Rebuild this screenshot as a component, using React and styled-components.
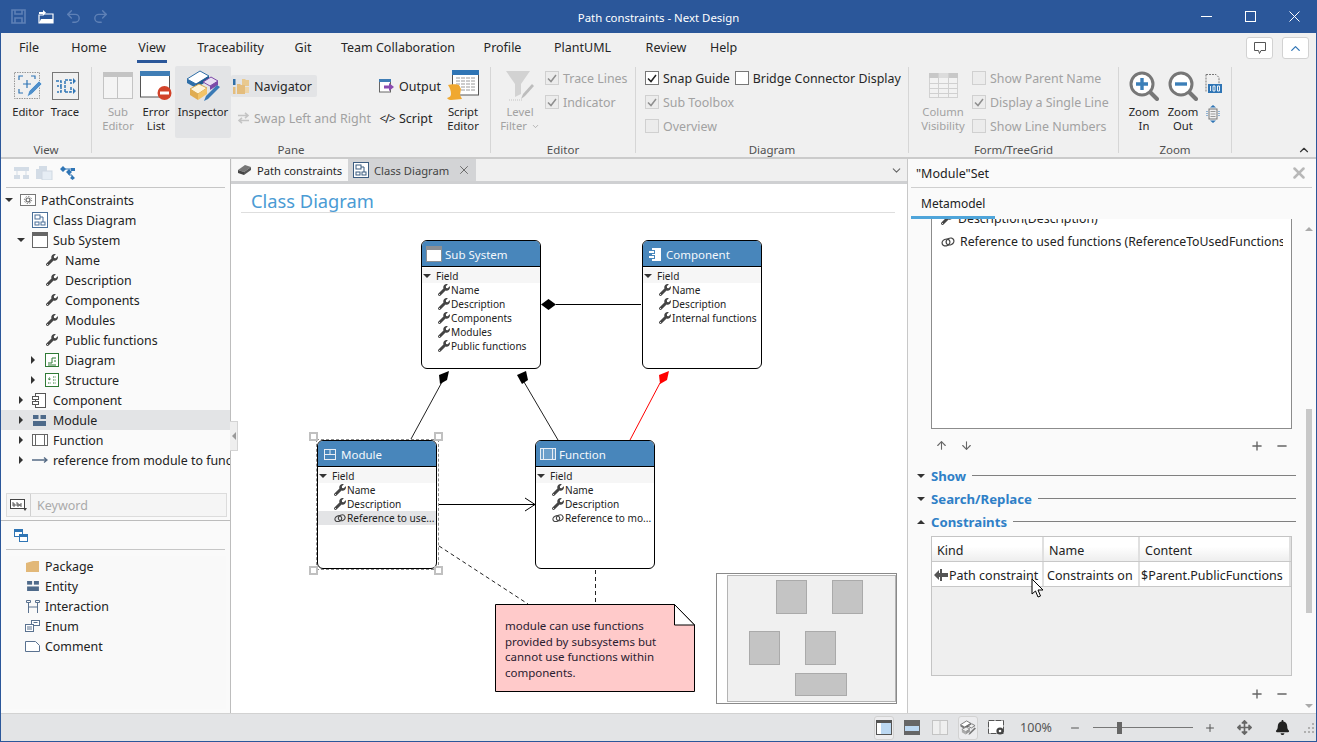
import React from "react";
import styled, { createGlobalStyle } from "styled-components";
import { FaWrench, FaBell, FaArrowsAlt } from "react-icons/fa";
import { Undo2, Redo2, ArrowUp, ArrowDown, Plus, Minus, X, ChevronDown, ChevronUp } from "lucide-react";

const GlobalStyle = createGlobalStyle`
  html, body { margin: 0; padding: 0; overflow: hidden; }
  body { font-family: "Noto Sans", "Noto Sans CJK JP", sans-serif; font-size: 13px; color: #222; }
  * { box-sizing: border-box; }
  svg { display: block; flex-shrink: 0; }
`;

const Window = styled.div`
  width: 1317px;
  height: 742px;
  display: flex;
  flex-direction: column;
  border: 1px solid #2b579a;
  border-top: none;
  background: #f0f0f0;
  position: relative;
  overflow: hidden;
`;

/* title bar */
const TitleBar = styled.div`
  height: 33px;
  background: #2b579a;
  display: grid;
  grid-template-columns: 1fr auto 1fr;
  align-items: center;
  margin: 0 -1px;
  color: #fff;
`;
const Quick = styled.div`
  display: flex;
  align-items: center;
  padding-left: 8px;
  gap: 7.5px;
`;
const QuickBtn = styled.div`
  width: 20px;
  height: 20px;
  display: flex;
  align-items: center;
  justify-content: center;
  color: ${(p) => (p.$dim ? "#5e80b6" : "#fff")};
`;
const Title = styled.div`
  font-size: 11.4px;
  line-height: 16px;
  padding-top: 2px;
`;
const WinControls = styled.div`
  display: flex;
  justify-content: flex-end;
  padding-right: 1px;
`;
const WinBtn = styled.div`
  width: 44px;
  height: 33px;
  display: flex;
  align-items: center;
  justify-content: center;
`;

/* ribbon */
const RibbonTabs = styled.div`
  height: 30px;
  display: flex;
  align-items: flex-start;
  padding-left: 1px;
  position: relative;
`;
const RibbonTab = styled.div`
  margin-left: ${(p) => p.$ml || 0}px;
  width: ${(p) => p.$w}px;
  height: 30px;
  text-align: center;
  line-height: 29px;
  font-size: 12.5px;
  color: #262626;
  border-bottom: 3px solid ${(p) => (p.$active ? "#2b579a" : "transparent")};
`;
const RibbonRight = styled.div`
  margin-left: auto;
  margin-right: 7px;
  margin-top: 4px;
  display: flex;
  gap: 9px;
`;
const SquareBtn = styled.div`
  width: 27px;
  height: 22px;
  background: #fff;
  border: 1px solid #d2d2d2;
  border-radius: 3px;
  display: flex;
  align-items: center;
  justify-content: center;
  color: ${(p) => p.$color || "#444"};
`;
const RibbonBody = styled.div`
  height: 96px;
  display: flex;
  border-bottom: 2px solid #cbcbcb;
  position: relative;
`;
const Group = styled.div`
  width: ${(p) => p.$w}px;
  display: flex;
  flex-direction: column;
`;
const GroupBody = styled.div`
  height: 79px;
  padding-top: 3px;
  padding-left: ${(p) => p.$pl || 0}px;
  display: flex;
  align-items: flex-start;
`;
const GroupLabel = styled.div`
  text-align: center;
  font-size: 11.5px;
  line-height: 15px;
  color: #505050;
`;
const Sep = styled.div`
  width: 1px;
  margin: 4px 0 4px;
  background: #d6d6d6;
`;
const LargeBtn = styled.div`
  width: ${(p) => p.$w}px;
  margin-left: ${(p) => p.$ml || 0}px;
  height: 72px;
  display: flex;
  flex-direction: column;
  align-items: center;
  border-radius: 2px;
  background: ${(p) => (p.$active ? "#e3e4e6" : "transparent")};
  color: ${(p) => (p.$off ? "#a2a2a2" : "#262626")};
`;
const LargeIcon = styled.div`
  height: 39px;
  display: flex;
  align-items: center;
  justify-content: center;
`;
const LargeText = styled.div`
  font-size: 11.3px;
  line-height: 14px;
  text-align: center;
  white-space: pre;
`;
const FilterLine = styled.div`
  display: flex;
  align-items: center;
  justify-content: center;
  gap: 1px;
`;
const SmallCol = styled.div`
  width: ${(p) => p.$w}px;
  padding-top: 9px;
  display: flex;
  flex-direction: column;
  gap: 10px;
`;
const SmallBtn = styled.div`
  align-self: flex-start;
  height: 22px;
  display: flex;
  align-items: center;
  gap: ${(p) => p.$gap || 4}px;
  padding: 0 ${(p) => p.$pr || 0}px 0 ${(p) => p.$pl || 0}px;
  border-radius: 2px;
  font-size: 12.5px;
  white-space: nowrap;
  background: ${(p) => (p.$active ? "#e3e4e6" : "transparent")};
  color: ${(p) => (p.$off ? "#a2a2a2" : "#262626")};
`;
const Angle = styled.span`
  width: 16px;
  text-align: center;
  font-size: 12px;
  letter-spacing: -1px;
`;
const CheckCol = styled.div`
  margin-left: ${(p) => p.$ml || 0}px;
  display: flex;
  flex-direction: column;
`;
const CheckRow = styled.div`
  height: 24px;
  display: flex;
  align-items: center;
`;
const CheckItem = styled.div`
  display: flex;
  align-items: center;
  gap: 4px;
  margin-left: ${(p) => p.$ml || 0}px;
  font-size: 12.4px;
  white-space: nowrap;
  color: ${(p) => (p.$off ? "#a2a2a2" : "#262626")};
`;
const CheckBox = styled.div`
  width: 14px;
  height: 14px;
  border: 1px solid ${(p) => (p.$off ? "#d0d0d0" : "#777")};
  background: ${(p) => (p.$off ? "#ececec" : "#fff")};
  display: flex;
  align-items: center;
  justify-content: center;
`;
const MiniCol = styled.div`
  margin-left: 4px;
  padding-top: 8px;
  display: flex;
  flex-direction: column;
  gap: 12px;
`;
const RibbonCollapse = styled.div`
  position: absolute;
  right: 5px;
  bottom: 0;
  color: #333;
`;

/* main */
const Main = styled.div`
  flex: 1;
  display: flex;
  min-height: 0;
`;
const LeftPane = styled.div`
  width: 230px;
  background: #fafafa;
  border-right: 1px solid #bdbdbd;
  display: flex;
  flex-direction: column;
  position: relative;
`;
const PaneBar = styled.div`
  height: 29px;
  margin: 0 5px;
  border-bottom: 1px solid #c6c6c6;
  display: flex;
  align-items: center;
  gap: 7px;
  padding-left: 8px;
`;
const Tree = styled.div`
  height: 302px;
  margin-top: 2px;
  overflow: hidden;
`;
const TreeRow = styled.div`
  height: 20px;
  display: flex;
  align-items: center;
  padding-left: ${(p) => 2 + p.$level * 12}px;
  background: ${(p) => (p.$selected ? "#e3e4e6" : "transparent")};
  font-size: 12.4px;
  white-space: nowrap;
  overflow: hidden;
`;
const ArrowCell = styled.div`
  width: 12px;
  flex-shrink: 0;
  display: flex;
  justify-content: center;
`;
const IconCell = styled.div`
  width: 26px;
  padding-right: 1px;
  flex-shrink: 0;
  display: flex;
  justify-content: center;
`;
const SearchWrap = styled.div`
  height: 29px;
  padding: 1px 3px 0 5px;
  border-bottom: 1px solid #bcbcbc;
`;
const SearchBox = styled.div`
  height: 24px;
  width: 221px;
  border: 1px solid #dcdcdc;
  background: #f5f5f5;
  display: flex;
  align-items: center;
`;
const SearchIcon = styled.div`
  width: 24px;
  height: 100%;
  border-right: 1px solid #d0d0d0;
  display: flex;
  align-items: center;
  justify-content: center;
`;
const Placeholder = styled.span`
  font-size: 12.5px;
  color: #aaa;
  padding-left: 6px;
`;
const Palette = styled.div`
  flex: 1;
  margin: 6px 4px 4px;
  background: #f9f9f9;
`;
const PaletteRow = styled.div`
  height: 20px;
  display: flex;
  align-items: center;
  padding-left: 20px;
  gap: 5px;
  font-size: 12.4px;
`;
const PaletteIcon = styled.div`
  width: 15px;
  display: flex;
  justify-content: center;
`;
const Splitter = styled.div`
  position: absolute;
  right: -8px;
  top: 262px;
  width: 8px;
  height: 30px;
  background: #eee;
  border: 1px solid #d4d4d4;
  border-left: none;
  display: flex;
  align-items: center;
  justify-content: center;
  z-index: 3;
`;

/* center */
const Center = styled.div`
  width: 676px;
  display: flex;
  flex-direction: column;
  background: #fff;
`;
const DocTabs = styled.div`
  height: 25px;
  background: #f0f0f0;
  border-bottom: 3px solid #cfd0d2;
  display: flex;
  align-items: stretch;
  padding-left: 1px;
  position: relative;
`;
const DocTab = styled.div`
  width: ${(p) => p.$w}px;
  display: flex;
  align-items: center;
  gap: 5px;
  padding-left: ${(p) => p.$pl}px;
  background: ${(p) => (p.$active ? "#d3d4d6" : "#f7f7f7")};
  font-size: 11.2px;
  white-space: nowrap;
  color: ${(p) => (p.$active ? "#444" : "#262626")};
`;
const DocClose = styled.div`
  margin-left: 3px;
  color: #555;
`;
const DocMenu = styled.div`
  margin-left: auto;
  margin-right: 4px;
  align-self: center;
  color: #666;
`;
const Stage = styled.div`
  flex: 1;
  position: relative;
  overflow: hidden;
`;
const DiagramTitle = styled.div`
  margin: 7px 12px 0 10px;
  height: 22px;
  border-bottom: 1px solid #dedede;
  padding-left: 10px;
  color: #4a9bd4;
  font-size: 18.3px;
  line-height: 20px;
`;
const Wires = styled.svg`
  position: absolute;
  inset: 0;
`;
const Node = styled.div`
  position: absolute;
  left: ${(p) => p.$x}px;
  top: ${(p) => p.$y}px;
  width: 120px;
  height: 129px;
  border: 1px solid #000;
  border-radius: 6px;
  background: #fff;
  overflow: hidden;
`;
const NodeHead = styled.div`
  height: 26px;
  background: #4886bb;
  border-bottom: 1px solid #000;
  color: #f4f8fc;
  display: flex;
  align-items: center;
  gap: 3px;
  padding: 1px 0 0 4px;
  font-size: 11.5px;
`;
const HeadIcon = styled.div`
  width: 16px;
  display: flex;
  justify-content: center;
`;
const NodeField = styled.div`
  margin-top: 1px;
  padding: 1px 0 0 1px;
  height: 15px;
  background: #f6f6f6;
  display: flex;
  align-items: center;
  gap: 5px;
  font-size: 10.1px;
`;
const NodeMember = styled.div`
  height: 14px;
  display: flex;
  align-items: center;
  gap: 1px;
  padding-left: 16px;
  font-size: 10.1px;
  white-space: nowrap;
  overflow: hidden;
  background: ${(p) => (p.$selected ? "#e3e4e6" : "transparent")};
`;
const Handle = styled.div`
  position: absolute;
  left: ${(p) => p.$x}px;
  top: ${(p) => p.$y}px;
  width: 9px;
  height: 9px;
  background: #fff;
  border: 2px solid #c0c0c0;
`;
const Selection = styled.div`
  position: absolute;
  left: 85px;
  top: 255px;
  width: 123px;
  height: 131px;
  border: 1px dashed #8a8a8a;
`;
const Note = styled.div`
  position: absolute;
  left: 264px;
  top: 420px;
  width: 200px;
  height: 88px;
  padding: 14px 30px 0 10px;
  font-size: 11.5px;
  line-height: 15.7px;
  color: #2a2030;
`;
const NoteShape = styled.svg`
  position: absolute;
  left: 264px;
  top: 420px;
`;
const Overview = styled.svg`
  position: absolute;
  left: 485px;
  top: 389px;
`;

/* right pane */
const RightPane = styled.div`
  flex: 1;
  background: #fafafa;
  border-left: 1px solid #c8c8c8;
  display: flex;
  flex-direction: column;
  position: relative;
  min-width: 0;
`;
const RightHead = styled.div`
  height: 29px;
  margin: 0 4px 0 3px;
  border-bottom: 1px solid #cfcfcf;
  display: flex;
  align-items: center;
  justify-content: space-between;
  padding: 0 4px 0 5px;
  font-size: 12.5px;
`;
const RightTabs = styled.div`
  height: 31px;
  margin-left: 3px;
  display: flex;
`;
const RightTab = styled.div`
  width: 84px;
  padding-left: 10px;
  line-height: 32px;
  font-size: 12px;
  border-bottom: 3px solid #4fa5da;
`;
const RightBody = styled.div`
  flex: 1;
  display: flex;
  min-height: 0;
`;
const RightContent = styled.div`
  width: 396px;
  padding-left: 23px;
  display: flex;
  flex-direction: column;
`;
const ListBox = styled.div`
  width: 361px;
  height: 210px;
  background: #fff;
  border: 1px solid #8c8c8c;
  border-top: none;
  overflow: hidden;
  padding: 0 8px 0 9px;
`;
const ListInner = styled.div`
  margin-top: -12px;
`;
const ListRow = styled.div`
  height: 23px;
  display: flex;
  align-items: center;
  gap: 5px;
  font-size: 12.3px;
  white-space: nowrap;
  overflow: hidden;
`;
const ListTools = styled.div`
  width: 361px;
  height: ${(p) => p.$h}px;
  flex-shrink: 0;
  display: flex;
  align-items: center;
  padding: 0 3px 0 4px;
  gap: 12px;
  color: #666;
`;
const Push = styled.div`
  margin-left: auto;
`;
const PlusMinus = styled.div`
  display: flex;
  gap: 11px;
`;
const Sections = styled.div`
  margin: 2px 8px 0 -14px;
`;
const Section = styled.div`
  height: 23px;
  display: flex;
  align-items: center;
  gap: 6px;
`;
const SectionName = styled.div`
  font-size: 13.2px;
  font-weight: 700;
  color: #2f80c7;
  white-space: nowrap;
`;
const SectionLine = styled.div`
  flex: 1;
  height: 1px;
  background: #808080;
`;
const Table = styled.div`
  width: 361px;
  height: 140px;
  margin-top: 3px;
  border: 1px solid #c4c4c4;
  background: #efefef;
  flex-shrink: 0;
`;
const TableRow = styled.div`
  display: grid;
  grid-template-columns: 112px 96px 151px;
  height: ${(p) => p.$h}px;
  border-bottom: 1px solid #c8c8c8;
  background: ${(p) => (p.$head ? "linear-gradient(#fff 40%, #eeeeee)" : "#fff")};
`;
const Cell = styled.div`
  display: flex;
  align-items: center;
  gap: 1px;
  padding: 2px 0 0 ${(p) => p.$pl || 2}px;
  border-right: 2px solid #e0e0e0;
  font-size: 12.5px;
  white-space: nowrap;
  overflow: hidden;
`;
const Scrollbar = styled.div`
  width: 10px;
  display: flex;
  flex-direction: column;
  align-items: center;
  padding-top: 6px;
`;
const Thumb = styled.div`
  width: 6px;
  height: 204px;
  margin-top: 176px;
  background: #c8c8c8;
`;
const ScrollEnd = styled.div`
  margin-top: 89px;
`;
const Cursor = styled.svg`
  position: absolute;
  left: 123px;
  top: 419px;
`;

/* status bar */
const StatusBar = styled.div`
  height: 28px;
  background: #e3e4e6;
  border-top: 1px solid #d2d2d2;
  display: flex;
  align-items: center;
  justify-content: flex-end;
  padding-right: 1px;
`;
const StatusItem = styled.div`
  margin-left: ${(p) => p.$ml || 0}px;
  height: 24px;
  width: ${(p) => p.$w}px;
  display: flex;
  align-items: center;
  justify-content: center;
  color: #555;
  font-size: 12.5px;
  white-space: nowrap;
  border: ${(p) => (p.$on ? "1px solid #d2d2d2" : "none")};
  border-radius: 3px;
  background: ${(p) => (p.$on ? "#ececee" : "transparent")};
`;
const Slider = styled.div`
  margin-left: 13px;
  width: 100px;
  height: 14px;
  position: relative;
  display: flex;
  align-items: center;
  &::before {
    content: "";
    display: block;
    width: 100%;
    height: 1px;
    background: #777;
  }
`;
const SliderThumb = styled.div`
  position: absolute;
  left: 24px;
  top: 1px;
  width: 5px;
  height: 12px;
  background: #666;
`;

/* tiny arrows */
const Tri = ({ dir = "down", c = "#333" }) => {
  const pts = { down: "0,2 8,2 4,6", right: "2,0 6,4 2,8", up: "0,6 8,6 4,2", left: "6,0 2,4 6,8" };
  return (
    <svg width="8" height="8" viewBox="0 0 8 8">
      <polygon points={pts[dir]} fill={c} />
    </svg>
  );
};

/* icons */
const Floppy = () => (
  <svg width="15" height="15" viewBox="0 0 15 15" fill="none" stroke="currentColor" strokeWidth="1.6">
    <path d="M1 1h13v13H1z" />
    <path d="M4 1v4h7V1M4 14V9h7v5" />
  </svg>
);
const OpenFile = () => (
  <svg width="16" height="15" viewBox="0 0 16 15">
    <path d="M1 6h4l1-1h9v9H1z" fill="none" stroke="#fff" strokeWidth="1.2" />
    <path d="M1 14l2-4h12v4z" fill="#fff" />
    <path d="M1 3h4V1l3 2.8L5 6.5V5H1z" fill="#fff" />
  </svg>
);
const EditorIco = () => (
  <svg width="30" height="29" viewBox="0 0 30 29" fill="none">
    <rect x="1.5" y="1.5" width="25" height="26" stroke="#999" strokeDasharray="1.5 1" />
    <path d="M6 9V5h4M18 5h4v3M6 18v4h4" stroke="#2f75b5" strokeWidth="1.2" />
    <path d="M14 9v8M10 13h8" stroke="#2f75b5" strokeWidth="1.2" />
    <path d="M14 26l2-6 10-10 3 3-10 10z" fill="#4f8fca" stroke="#fff" strokeWidth=".6" />
  </svg>
);
const TraceIco = () => (
  <svg width="27" height="28" viewBox="0 0 27 28" fill="none">
    <rect x=".5" y=".5" width="26" height="27" stroke="#777" />
    <path d="M4 9h5v5H5m4 0v6H5M13 20V8h6v4m-6 8h6v-5" stroke="#2f75b5" strokeWidth="1.5" strokeDasharray="3 1" />
    <path d="M21 6l3 3-3 3zM21 16l3 3-3 3z" fill="#2f75b5" />
  </svg>
);
const SubEditorIco = () => (
  <svg width="30" height="27" viewBox="0 0 30 27" fill="none">
    <rect x=".5" y=".5" width="29" height="26" fill="#f4f4f4" stroke="#c4c4c4" />
    <rect x="0" y="0" width="30" height="5" fill="#c4c4c4" />
    <path d="M14.5 5v22" stroke="#c4c4c4" />
  </svg>
);
const ErrorIco = () => (
  <svg width="33" height="30" viewBox="0 0 33 30" fill="none">
    <rect x=".5" y="1" width="29" height="25" fill="#fff" stroke="#555" />
    <rect x="0" y="0" width="30" height="5" fill="#3f7db5" />
    <circle cx="24.5" cy="22" r="7" fill="#d2432a" />
    <rect x="20" y="20.5" width="9" height="3" fill="#fff" />
  </svg>
);
const InspectorIco = ({ s = 34 }) => (
  <svg width={s} height={(s * 32) / 34} viewBox="0 0 34 32">
    <path d="M1 9l13-8 9 5-13 8z" fill="#fff" stroke="#2f6fa8" />
    <path d="M1 9l9 5v4L1 13z" fill="#2f6fa8" />
    <path d="M10 14l13-8v4L10 18z" fill="#1f5a90" />
    <path d="M17 12l8-5 7 4-8 5z" fill="#e9dff3" stroke="#7d4aa8" />
    <path d="M24 16l8-5v4l-8 5z" fill="#7d4aa8" />
    <path d="M4 19l9-5 8 4-9 6z" fill="#fff4d8" stroke="#d8a84e" />
    <path d="M4 19l8 5v6l-8-5z" fill="#e0ac50" />
    <path d="M12 24l9-6v6l-9 6z" fill="#f3c468" />
    <path d="M18 31l2-5 11-11 3 2-12 12z" fill="#3a7ab5" />
  </svg>
);
const GrayInspectorIco = () => (
  <svg width="16" height="16" viewBox="0 0 34 32">
    <path d="M1 9l13-8 9 5-13 8z" fill="#fff" stroke="#777" strokeWidth="2" />
    <path d="M1 9l9 5v4L1 13z" fill="#777" />
    <path d="M10 14l13-8v4L10 18z" fill="#666" />
    <path d="M17 12l8-5 7 4-8 5z" fill="#eee" stroke="#777" strokeWidth="2" />
    <path d="M4 19l9-5 8 4-9 6z" fill="#eee" stroke="#888" strokeWidth="2" />
    <path d="M4 19l8 5v6l-8-5z" fill="#aaa" />
    <path d="M12 24l9-6v6l-9 6z" fill="#999" />
    <path d="M18 31l2-5 11-11 3 2-12 12z" fill="#777" />
  </svg>
);
const PathModelIco = () => (
  <svg width="15" height="12" viewBox="0 0 15 12">
    <path d="M1 6l7-5 6 2-7 5z" fill="#777" />
    <path d="M1 6l6 2v3L1 9z" fill="#444" />
    <path d="M7 8l7-5v3l-7 5z" fill="#555" />
  </svg>
);
const NavigatorIco = () => (
  <svg width="17" height="17" viewBox="0 0 17 17">
    <rect x="0" y="1" width="2.5" height="6" fill="#2f6fa8" />
    <rect x="0" y="9" width="2.5" height="7" fill="#e4bd7d" />
    <path d="M9 1h3l1 1h3v6H9z" fill="#e9c98f" />
    <path d="M4 6h3l1 1h4v9H4z" fill="#e4bd7d" />
    <path d="M9 9h7v6h-4V9z" fill="#eed5a8" />
  </svg>
);
const SwapIco = () => (
  <svg width="13" height="12" viewBox="0 0 13 12" fill="none" stroke="#c4c4c4" strokeWidth="1.6">
    <path d="M1 3.5h10M8 .8l3 2.7-3 2.7M12 8.5H2M5 5.8L2 8.5l3 2.7" />
  </svg>
);
const OutputIco = () => (
  <svg width="16" height="14" viewBox="0 0 16 14">
    <rect x=".5" y=".5" width="11" height="12.5" fill="#fff" stroke="#666" />
    <rect x="0" y="0" width="12" height="3" fill="#3f7db5" />
    <path d="M5 6.5h5V4l5 4-5 4V9.5H5z" fill="#8a4bb0" />
  </svg>
);
const ScriptEditorIco = () => (
  <svg width="32" height="31" viewBox="0 0 32 31">
    <rect x="5.5" y="1" width="26" height="24" fill="#fff" stroke="#555" />
    <rect x="5" y="0" width="27" height="5" fill="#2f75b5" />
    <path d="M9 8h19M9 11h19M9 14h19M9 17h19M9 20h19" stroke="#9a9a9a" strokeDasharray="4 1" />
    <path d="M1 15c3-1 9-1 11 0l2 4-1 6 2 4-11 1c-3 0-4-2-4-2 3-1 4-2 4-4 0-3-1-6-3-9z" fill="#f0a830" />
  </svg>
);
const FunnelIco = () => (
  <svg width="30" height="31" viewBox="0 0 30 31">
    <path d="M1 1h24l-9 13v10l-6 3V14z" fill="#d2d2d2" />
    <path d="M16 29l2-5 9-10 2 2-9 10z" fill="#bdbdbd" />
    <path d="M4 30h14" stroke="#c4c4c4" strokeDasharray="1 1" />
  </svg>
);
const ColumnsIco = () => (
  <svg width="29" height="25" viewBox="0 0 29 25" fill="none">
    <rect x=".5" y=".5" width="28" height="24" fill="#f2f2f2" stroke="#d2d2d2" />
    <rect x="0" y="0" width="29" height="5" fill="#c8c8c8" />
    <path d="M9.5 0v25M19.5 0v25M0 10.5h29M0 15.5h29M0 20.5h29" stroke="#d0d0d0" />
    <rect x="10" y="0" width="9" height="5" fill="#dcdcdc" />
  </svg>
);
const ZoomIco = ({ plus }) => (
  <svg width="30" height="30" viewBox="0 0 30 30" fill="none">
    <path d="M20 20l8 8" stroke="#777" strokeWidth="4" strokeLinecap="round" />
    <circle cx="13" cy="13" r="11" fill="#fff" stroke="#777" strokeWidth="3" />
    <path d={plus ? "M7 13h12M13 7v12" : "M7 13h12"} stroke="#3c7fb8" strokeWidth="3.4" />
  </svg>
);
const PageIco = () => (
  <svg width="17" height="19" viewBox="0 0 17 19" fill="none">
    <path d="M1 .5h10l3 3V10M1 .5V18" stroke="#777" strokeDasharray="2 1" />
    <rect x="3" y="10" width="14" height="9" fill="#2f75b5" />
    <path d="M5.5 12v5M8 12h2v5H8zM12.5 12h2v5h-2z" stroke="#fff" strokeWidth=".9" />
  </svg>
);
const FitIco = () => (
  <svg width="16" height="18" viewBox="0 0 16 18" fill="none">
    <rect x="4" y="4" width="8" height="10" stroke="#777" />
    <path d="M5.5 6.5h5M5.5 9h5M5.5 11.5h5" stroke="#9a9a9a" />
    <path d="M5 2.5L8 0l3 2.5zM5 15.5L8 18l3-2.5z" fill="#2f75b5" />
    <path d="M2 6v6M14 6v6" stroke="#2f75b5" strokeDasharray="1 1" />
  </svg>
);
const CommentIco = () => (
  <svg width="14" height="14" viewBox="0 0 14 14" fill="none" stroke="#555">
    <path d="M1.5 1.5h11v8H8l-1.5 3-1-3h-4z" />
  </svg>
);
const TreeTool = () => (
  <svg width="15" height="13" viewBox="0 0 15 13" fill="#d3dce6">
    <rect x="0" y="0" width="15" height="4" />
    <rect x="0" y="8" width="6" height="4" />
    <rect x="9" y="8" width="6" height="4" />
    <path d="M3 4v4M12 4v4" stroke="#d3dce6" />
  </svg>
);
const CopyTool = () => (
  <svg width="17" height="14" viewBox="0 0 17 14" fill="#d3dce6">
    <rect x="0" y="3" width="6" height="10" />
    <rect x="3" y="0" width="8" height="5" />
    <rect x="6" y="5" width="10" height="9" fill="#e6edf4" stroke="#cfd8e2" />
  </svg>
);
const NetTool = () => (
  <svg width="15" height="14" viewBox="0 0 15 14" fill="#2f75b5">
    <path d="M0 3l3-3 3 3-3 3zM6 6l3-3 3 3-3 3zM10 12l2.500-2.500L15 12l-2.500 2z" />
    <rect x="11" y="2" width="4" height="3" />
    <path d="M3 3h10M9 6v3h3v2" stroke="#2f75b5" fill="none" />
  </svg>
);
const PackageIco = () => (
  <svg width="16" height="16" viewBox="0 0 16 16" fill="none">
    <rect x=".5" y="2.500" width="15" height="11" fill="#fff" stroke="#777" />
    <circle cx="8" cy="8" r="2" stroke="#666" strokeWidth="1.2" />
    <circle cx="8" cy="8" r="3.600" stroke="#666" strokeDasharray="1.2 1.6" />
  </svg>
);
const DiagramIco = ({ c = "#4a6f98" }) => (
  <svg width="16" height="16" viewBox="0 0 16 16" fill="none" stroke={c}>
    <rect x=".5" y=".5" width="15" height="15" fill="#fff" />
    <rect x="3" y="3" width="5" height="4" />
    <rect x="3" y="10" width="4" height="3" />
    <rect x="9" y="10" width="4" height="3" />
    <path d="M8 5h3v5" />
  </svg>
);
const WindowIco = ({ c = "#666", fill = "#fff" }) => (
  <svg width="16" height="16" viewBox="0 0 16 16" fill={fill} stroke={c}>
    <rect x=".5" y=".5" width="15" height="15" />
    <rect x="0" y="0" width="16" height="4" fill={c} stroke="none" />
  </svg>
);
const GreenDiagram = () => (
  <svg width="14" height="14" viewBox="0 0 14 14" fill="none" stroke="#2f7a35">
    <rect x=".5" y=".5" width="13" height="13" fill="#fff" />
    <path d="M3 10h4V5h4M3 12h8M9 8h2" />
  </svg>
);
const GreenTable = () => (
  <svg width="14" height="14" viewBox="0 0 14 14" fill="none" stroke="#2f7a35">
    <rect x=".5" y=".5" width="13" height="13" fill="#fff" />
    <path d="M3 6h3M4.500 4.500v3M8 4h3M8 7h3M8 10h3M3 10h3" strokeDasharray="1 .6" />
  </svg>
);
const ComponentIco = ({ c = "#555", fill = "#fff" }) => (
  <svg width="15" height="15" viewBox="0 0 15 15" fill={fill} stroke={c}>
    <rect x="3.500" y=".5" width="10" height="14" />
    <rect x=".5" y="3.500" width="6" height="3" />
    <rect x=".5" y="8.500" width="6" height="3" />
  </svg>
);
const ModuleIco = ({ c = "#4e6a8a", w = 13, h = 11 }) => (
  <svg width={w} height={h} viewBox="0 0 13 11" fill={c}>
    <rect x="0" y="0" width="5.500" height="4" />
    <rect x="7.500" y="0" width="5.500" height="4" />
    <rect x="0" y="6" width="13" height="5" />
  </svg>
);
const ModuleOutlineIco = () => (
  <svg width="12" height="11" viewBox="0 0 12 11" fill="none" stroke="#e8eef5">
    <rect x=".5" y=".5" width="11" height="10" />
    <path d="M0 5.500h12M6 0v5.500" />
  </svg>
);
const FunctionIco = ({ c = "#666", fill = "#fff" }) => (
  <svg width="16" height="12" viewBox="0 0 16 12" fill={fill} stroke={c}>
    <rect x=".5" y=".5" width="15" height="11" />
    <path d="M3.500 0v12M12.500 0v12" />
  </svg>
);
const LongArrow = () => (
  <svg width="16" height="8" viewBox="0 0 16 8" fill="none" stroke="#566b85" strokeWidth="1.4">
    <path d="M0 4h15M12 1.500L15 4l-3 2.500" />
  </svg>
);
const Link = ({ s = 14 }) => (
  <svg width={s} height={(s * 10) / 14} viewBox="0 0 14 10" fill="none" stroke="#444" strokeWidth="1.3">
    <ellipse cx="5" cy="5.500" rx="4" ry="3.300" transform="rotate(-25 5 5.500)" />
    <ellipse cx="9" cy="4.500" rx="4" ry="3.300" transform="rotate(-25 9 4.500)" />
  </svg>
);
const Wrench = () => <FaWrench size={12} color="#444" />;
const AbcIco = () => (
  <svg width="17" height="12" viewBox="0 0 17 12" fill="none">
    <rect x=".5" y=".5" width="14" height="9" stroke="#444" fill="#fff" />
    <path d="M3 3v4h2V5H3M7 3v4h2V5H7M12 5h-2v2h2" stroke="#333" strokeWidth=".8" />
    <path d="M13 9h4l-2 3z" fill="#444" />
  </svg>
);
const WindowsTool = () => (
  <svg width="14" height="13" viewBox="0 0 14 13" fill="none" stroke="#2f75b5">
    <rect x=".5" y=".5" width="8" height="7" fill="#fff" />
    <path d="M0 2h9" strokeWidth="2" />
    <rect x="5.500" y="5.500" width="8" height="7" fill="#fff" />
    <path d="M5 7h9" strokeWidth="2" />
  </svg>
);
const FolderIco = () => (
  <svg width="14" height="11" viewBox="0 0 14 11" fill="#e2b878">
    <path d="M0 2l7-2h6v11H0z" />
  </svg>
);
const InteractionIco = () => (
  <svg width="14" height="13" viewBox="0 0 14 13" fill="none" stroke="#5a7290">
    <path d="M.5.5h4v2h-4zM9.500.5h4v2h-4zM2.500 3v10M11.500 3v10M2.500 7h9" />
  </svg>
);
const EnumIco = () => (
  <svg width="15" height="12" viewBox="0 0 15 12" fill="#fff" stroke="#5a7290">
    <rect x="6.500" y=".5" width="8" height="5" />
    <rect x=".5" y="4.500" width="8" height="7" />
    <path d="M2 7h5M2 9h5M8.500 2.500h4" />
  </svg>
);
const CommentShape = () => (
  <svg width="15" height="11" viewBox="0 0 15 11" fill="#fff" stroke="#5a7290">
    <path d="M.5.500h10l4 4v6H.5z" />
  </svg>
);
const PathConstraintIco = () => (
  <svg width="14" height="12" viewBox="0 0 14 12" fill="#555">
    <path d="M0 6l5-5v3h9v4H5v3z" />
    <rect x="6" y="0" width="2" height="12" />
  </svg>
);
const MinLine = () => (
  <svg width="11" height="1" viewBox="0 0 11 1">
    <rect width="11" height="1" fill="#fff" />
  </svg>
);
const MaxBox = () => (
  <svg width="11" height="11" viewBox="0 0 11 11" fill="none" stroke="#fff">
    <rect x=".5" y=".5" width="10" height="10" />
  </svg>
);
const CloseX = () => (
  <svg width="11" height="11" viewBox="0 0 11 11" stroke="#fff">
    <path d="M.5.500l10 10M10.500.500l-10 10" />
  </svg>
);
const PaneLeftIco = () => (
  <svg width="16" height="15" viewBox="0 0 16 15">
    <rect x=".5" y=".5" width="15" height="14" fill="#bcd8f2" stroke="#555" />
    <rect x="0" y="0" width="16" height="3" fill="#555" />
    <rect x="1" y="3" width="4" height="11" fill="#fff" />
  </svg>
);
const PaneBottomIco = () => (
  <svg width="16" height="15" viewBox="0 0 16 15">
    <rect x=".5" y=".5" width="15" height="14" fill="#bcd8f2" stroke="#666" />
    <rect x="0" y="0" width="16" height="6" fill="#666" />
    <rect x="0" y="11" width="16" height="4" fill="#666" />
  </svg>
);
const PaneSplitIco = () => (
  <svg width="16" height="15" viewBox="0 0 16 15" fill="#efefef" stroke="#c4c4c4">
    <rect x=".5" y=".5" width="15" height="14" />
    <path d="M8 0v15" />
  </svg>
);
const GearWindowIco = () => (
  <svg width="16" height="15" viewBox="0 0 16 15" fill="none">
    <rect x=".5" y=".5" width="15" height="13" stroke="#555" fill="#fff" strokeDasharray="6 1" />
    <circle cx="12" cy="11" r="3.600" fill="#444" />
    <circle cx="12" cy="11" r="1.300" fill="#fff" />
  </svg>
);
const GripIco = () => (
  <svg width="11" height="11" viewBox="0 0 11 11" fill="#b0b0b0">
    <rect x="8" y="1" width="2" height="2" />
    <rect x="4" y="5" width="2" height="2" />
    <rect x="8" y="5" width="2" height="2" />
    <rect x="0" y="9" width="2" height="2" />
    <rect x="4" y="9" width="2" height="2" />
    <rect x="8" y="9" width="2" height="2" />
  </svg>
);
const Check = ({ off }) => (
  <svg width="10" height="9" viewBox="0 0 10 9" fill="none" stroke={off ? "#8f8f8f" : "#222"} strokeWidth="1.5">
    <path d="M1 4.500l3 3L9 1" />
  </svg>
);
const CheckField = ({ label, checked, off, ml }) => (
  <CheckItem $off={off} $ml={ml}>
    <CheckBox $off={off}>{checked && <Check off={off} />}</CheckBox>
    {label}
  </CheckItem>
);

const treeRows = [
  { level: 0, arrow: "down", icon: <PackageIco />, text: "PathConstraints" },
  { level: 1, icon: <DiagramIco />, text: "Class Diagram" },
  { level: 1, arrow: "down", icon: <WindowIco />, text: "Sub System" },
  { level: 2, icon: <Wrench />, text: "Name" },
  { level: 2, icon: <Wrench />, text: "Description" },
  { level: 2, icon: <Wrench />, text: "Components" },
  { level: 2, icon: <Wrench />, text: "Modules" },
  { level: 2, icon: <Wrench />, text: "Public functions" },
  { level: 2, arrow: "right", icon: <GreenDiagram />, text: "Diagram" },
  { level: 2, arrow: "right", icon: <GreenTable />, text: "Structure" },
  { level: 1, arrow: "right", icon: <ComponentIco />, text: "Component" },
  { level: 1, arrow: "right", icon: <ModuleIco />, text: "Module", selected: true },
  { level: 1, arrow: "right", icon: <FunctionIco />, text: "Function" },
  { level: 1, arrow: "right", icon: <LongArrow />, text: "reference from module to function" },
];

const paletteRows = [
  { icon: <FolderIco />, text: "Package" },
  { icon: <ModuleIco w={12} h={10} />, text: "Entity" },
  { icon: <InteractionIco />, text: "Interaction" },
  { icon: <EnumIco />, text: "Enum" },
  { icon: <CommentShape />, text: "Comment" },
];

const diagramNodes = [
  {
    name: "Sub System",
    x: 190,
    y: 56,
    icon: <WindowIco c="#8b8f94" fill="#fff" />,
    members: ["Name", "Description", "Components", "Modules", "Public functions"],
  },
  {
    name: "Component",
    x: 411,
    y: 56,
    icon: <ComponentIco c="#4886bb" fill="#fff" />,
    members: ["Name", "Description", "Internal functions"],
  },
  {
    name: "Module",
    x: 86,
    y: 256,
    icon: <ModuleOutlineIco />,
    members: ["Name", "Description", { link: true, text: "Reference to use...", selected: true }],
  },
  {
    name: "Function",
    x: 304,
    y: 256,
    icon: <FunctionIco c="#e8eef5" fill="#6c9fca" />,
    members: ["Name", "Description", { link: true, text: "Reference to mo..." }],
  },
];

function ClassNode({ node }) {
  return (
    <Node $x={node.x} $y={node.y}>
      <NodeHead>
        <HeadIcon>{node.icon}</HeadIcon>
        {node.name}
      </NodeHead>
      <NodeField>
        <Tri />
        Field
      </NodeField>
      {node.members.map((m) => {
        const item = typeof m === "string" ? { text: m } : m;
        return (
          <NodeMember key={item.text} $selected={item.selected}>
            {item.link ? <Link s={12} /> : <Wrench />}
            {item.text}
          </NodeMember>
        );
      })}
    </Node>
  );
}

export default function App() {
  return (
    <>
      <GlobalStyle />
      <Window>
        <TitleBar>
          <Quick>
            <QuickBtn $dim><Floppy /></QuickBtn>
            <QuickBtn><OpenFile /></QuickBtn>
            <QuickBtn $dim><Undo2 size={17} /></QuickBtn>
            <QuickBtn $dim><Redo2 size={17} /></QuickBtn>
          </Quick>
          <Title>Path constraints - Next Design</Title>
          <WinControls>
            <WinBtn><MinLine /></WinBtn>
            <WinBtn><MaxBox /></WinBtn>
            <WinBtn><CloseX /></WinBtn>
          </WinControls>
        </TitleBar>

        <RibbonTabs>
          <RibbonTab $w={54}>File</RibbonTab>
          <RibbonTab $w={66}>Home</RibbonTab>
          <RibbonTab $w={30} $ml={15} $active>View</RibbonTab>
          <RibbonTab $w={97} $ml={15}>Traceability</RibbonTab>
          <RibbonTab $w={48}>Git</RibbonTab>
          <RibbonTab $w={142}>Team Collaboration</RibbonTab>
          <RibbonTab $w={67}>Profile</RibbonTab>
          <RibbonTab $w={93}>PlantUML</RibbonTab>
          <RibbonTab $w={74}>Review</RibbonTab>
          <RibbonTab $w={41}>Help</RibbonTab>
          <RibbonRight>
            <SquareBtn><CommentIco /></SquareBtn>
            <SquareBtn $color="#2f75b5"><ChevronUp size={15} /></SquareBtn>
          </RibbonRight>
        </RibbonTabs>

        <RibbonBody>
          <Group $w={90}>
            <GroupBody $pl={8}>
              <LargeBtn $w={38}>
                <LargeIcon><EditorIco /></LargeIcon>
                <LargeText>Editor</LargeText>
              </LargeBtn>
              <LargeBtn $w={36}>
                <LargeIcon><TraceIco /></LargeIcon>
                <LargeText>Trace</LargeText>
              </LargeBtn>
            </GroupBody>
            <GroupLabel>View</GroupLabel>
          </Group>
          <Sep />
          <Group $w={398}>
            <GroupBody $pl={6}>
              <LargeBtn $w={40} $off>
                <LargeIcon><SubEditorIco /></LargeIcon>
                <LargeText>{"Sub\nEditor"}</LargeText>
              </LargeBtn>
              <LargeBtn $w={36}>
                <LargeIcon><ErrorIco /></LargeIcon>
                <LargeText>{"Error\nList"}</LargeText>
              </LargeBtn>
              <LargeBtn $w={56} $ml={1} $active>
                <LargeIcon><InspectorIco /></LargeIcon>
                <LargeText>Inspector</LargeText>
              </LargeBtn>
              <SmallCol $w={148}>
                <SmallBtn $active $pl={2} $pr={5}>
                  <NavigatorIco />
                  Navigator
                </SmallBtn>
                <SmallBtn $off $pl={6} $gap={4}>
                  <SwapIco />
                  Swap Left and Right
                </SmallBtn>
              </SmallCol>
              <SmallCol $w={64}>
                <SmallBtn>
                  <OutputIco />
                  Output
                </SmallBtn>
                <SmallBtn>
                  <Angle>{"</>"}</Angle>
                  Script
                </SmallBtn>
              </SmallCol>
              <LargeBtn $w={40}>
                <LargeIcon><ScriptEditorIco /></LargeIcon>
                <LargeText>{"Script\nEditor"}</LargeText>
              </LargeBtn>
            </GroupBody>
            <GroupLabel>Pane</GroupLabel>
          </Group>
          <Sep />
          <Group $w={144}>
            <GroupBody $pl={11}>
              <LargeBtn $w={36} $off>
                <LargeIcon><FunnelIco /></LargeIcon>
                <LargeText>
                  Level
                  <FilterLine>Filter <ChevronDown size={9} /></FilterLine>
                </LargeText>
              </LargeBtn>
              <CheckCol $ml={7}>
                <CheckRow><CheckField off checked label="Trace Lines" /></CheckRow>
                <CheckRow><CheckField off checked label="Indicator" /></CheckRow>
              </CheckCol>
            </GroupBody>
            <GroupLabel>Editor</GroupLabel>
          </Group>
          <Sep />
          <Group $w={272}>
            <GroupBody $pl={9}>
              <CheckCol>
                <CheckRow>
                  <CheckField checked label="Snap Guide" />
                  <CheckField ml={5} label="Bridge Connector Display" />
                </CheckRow>
                <CheckRow><CheckField off checked label="Sub Toolbox" /></CheckRow>
                <CheckRow><CheckField off label="Overview" /></CheckRow>
              </CheckCol>
            </GroupBody>
            <GroupLabel>Diagram</GroupLabel>
          </Group>
          <Sep />
          <Group $w={209}>
            <GroupBody $pl={14}>
              <LargeBtn $w={40} $off>
                <LargeIcon><ColumnsIco /></LargeIcon>
                <LargeText>{"Column\nVisibility"}</LargeText>
              </LargeBtn>
              <CheckCol $ml={9}>
                <CheckRow><CheckField off label="Show Parent Name" /></CheckRow>
                <CheckRow><CheckField off checked label="Display a Single Line" /></CheckRow>
                <CheckRow><CheckField off label="Show Line Numbers" /></CheckRow>
              </CheckCol>
            </GroupBody>
            <GroupLabel>Form/TreeGrid</GroupLabel>
          </Group>
          <Sep />
          <Group $w={112}>
            <GroupBody $pl={7}>
              <LargeBtn $w={36}>
                <LargeIcon><ZoomIco plus /></LargeIcon>
                <LargeText>{"Zoom\nIn"}</LargeText>
              </LargeBtn>
              <LargeBtn $w={36} $ml={3}>
                <LargeIcon><ZoomIco /></LargeIcon>
                <LargeText>{"Zoom\nOut"}</LargeText>
              </LargeBtn>
              <MiniCol>
                <PageIco />
                <FitIco />
              </MiniCol>
            </GroupBody>
            <GroupLabel>Zoom</GroupLabel>
          </Group>
          <Sep />
          <RibbonCollapse><ChevronUp size={14} /></RibbonCollapse>
        </RibbonBody>

        <Main>
          <LeftPane>
            <PaneBar>
              <TreeTool />
              <CopyTool />
              <NetTool />
            </PaneBar>
            <Tree>
              {treeRows.map((row) => (
                <TreeRow key={row.text} $level={row.level} $selected={row.selected}>
                  <ArrowCell>{row.arrow && <Tri dir={row.arrow} />}</ArrowCell>
                  <IconCell>{row.icon}</IconCell>
                  {row.text}
                </TreeRow>
              ))}
            </Tree>
            <SearchWrap>
              <SearchBox>
                <SearchIcon><AbcIco /></SearchIcon>
                <Placeholder>Keyword</Placeholder>
              </SearchBox>
            </SearchWrap>
            <PaneBar>
              <WindowsTool />
            </PaneBar>
            <Palette>
              {paletteRows.map((row) => (
                <PaletteRow key={row.text}>
                  <PaletteIcon>{row.icon}</PaletteIcon>
                  {row.text}
                </PaletteRow>
              ))}
            </Palette>
            <Splitter><Tri dir="left" c="#999" /></Splitter>
          </LeftPane>

          <Center>
            <DocTabs>
              <DocTab $w={116} $pl={5}>
                <PathModelIco />
                Path constraints
              </DocTab>
              <DocTab $w={128} $pl={5} $active>
                <DiagramIco c="#3b5c80" />
                Class Diagram
                <DocClose><X size={14} strokeWidth={1.4} /></DocClose>
              </DocTab>
              <DocMenu><ChevronDown size={13} /></DocMenu>
            </DocTabs>
            <Stage>
              <DiagramTitle>Class Diagram</DiagramTitle>
              <Wires viewBox="231 184 676 529" width="676" height="529">
                <path d="M556 304.500H641" stroke="#000" />
                <polygon points="541,304.500 548.500,299 556,304.500 548.500,310" fill="#000" />
                <path d="M442 382L411 439" stroke="#222" />
                <polygon points="449,371 447,380 440,384 439,375" fill="#000" />
                <path d="M524 382L558 440" stroke="#222" />
                <polygon points="517,375 526,371 528,380 522,384" fill="#000" />
                <path d="M660 383L630 440" stroke="#f00" />
                <polygon points="669,371 667,380 660,384 659,375" fill="#f00" />
                <path d="M438 504.500H535M525 498l10 6.500-10 6.500" stroke="#000" fill="none" />
                <path d="M439 546L528 604M595.500 570V604" stroke="#222" strokeDasharray="4 3" />
              </Wires>
              {diagramNodes.map((node) => (
                <ClassNode key={node.name} node={node} />
              ))}
              <Selection />
              <Handle $x={78} $y={248} />
              <Handle $x={203} $y={248} />
              <Handle $x={78} $y={382} />
              <Handle $x={203} $y={382} />
              <NoteShape width="200" height="88" viewBox="0 0 200 88">
                <path d="M.5.500H179.500L199.500 21V87.500H.5z" fill="#ffcaca" stroke="#000" />
                <path d="M179.500.500V21H199.500z" fill="#fff" stroke="#000" />
              </NoteShape>
              <Note>module can use functions provided by subsystems but cannot use functions within components.</Note>
              <Overview width="181" height="131" viewBox="0 0 181 131">
                <rect x=".5" y=".5" width="180" height="130" fill="#fff" stroke="#8a8a8a" />
                <rect x="11.500" y="2.500" width="168" height="126" fill="#f0f0f0" stroke="#b4b4b4" />
                <g fill="#c4c4c4" stroke="#aaa">
                  <rect x="60.500" y="7.500" width="30" height="33" />
                  <rect x="116.500" y="7.500" width="30" height="33" />
                  <rect x="33.500" y="58.500" width="30" height="33" />
                  <rect x="89.500" y="58.500" width="30" height="33" />
                  <rect x="79.500" y="100.500" width="51" height="22" />
                </g>
              </Overview>
            </Stage>
          </Center>

          <RightPane>
            <RightHead>
              "Module"Set
              <X size={18} strokeWidth={3.4} color="#b8b8b8" />
            </RightHead>
            <RightTabs>
              <RightTab>Metamodel</RightTab>
            </RightTabs>
            <RightBody>
              <RightContent>
                <ListBox>
                  <ListInner>
                    <ListRow><Wrench />Description(Description)</ListRow>
                    <ListRow><Link />Reference to used functions (ReferenceToUsedFunctions)</ListRow>
                  </ListInner>
                </ListBox>
                <ListTools $h={33}>
                  <ArrowUp size={13} />
                  <ArrowDown size={13} />
                  <Push />
                  <PlusMinus>
                    <Plus size={14} strokeWidth={2.4} />
                    <Minus size={14} strokeWidth={2.4} />
                  </PlusMinus>
                </ListTools>
                <Sections>
                  <Section>
                    <Tri />
                    <SectionName>Show</SectionName>
                    <SectionLine />
                  </Section>
                  <Section>
                    <Tri />
                    <SectionName>Search/Replace</SectionName>
                    <SectionLine />
                  </Section>
                  <Section>
                    <Tri dir="up" />
                    <SectionName>Constraints</SectionName>
                    <SectionLine />
                  </Section>
                </Sections>
                <Table>
                  <TableRow $head $h={25}>
                    <Cell $pl={5}>Kind</Cell>
                    <Cell $pl={5}>Name</Cell>
                    <Cell $pl={5}>Content</Cell>
                  </TableRow>
                  <TableRow $h={25}>
                    <Cell $pl={2}><PathConstraintIco />Path constraint</Cell>
                    <Cell $pl={3}>Constraints on</Cell>
                    <Cell $pl={1}>$Parent.PublicFunctions</Cell>
                  </TableRow>
                </Table>
                <ListTools $h={35}>
                  <Push />
                  <PlusMinus>
                    <Plus size={14} strokeWidth={2.4} />
                    <Minus size={14} strokeWidth={2.4} />
                  </PlusMinus>
                </ListTools>
              </RightContent>
              <Scrollbar>
                <Tri dir="up" c="#aaa" />
                <Thumb />
                <ScrollEnd><Tri c="#aaa" /></ScrollEnd>
              </Scrollbar>
            </RightBody>
            <Cursor width="14" height="20" viewBox="0 0 14 20">
              <path d="M1 1v15l3.500-3 2.500 6 2.500-1-2.500-6h5z" fill="#fff" stroke="#000" />
            </Cursor>
          </RightPane>
        </Main>

        <StatusBar>
          <StatusItem $w={20} $on><PaneLeftIco /></StatusItem>
          <StatusItem $w={16} $ml={10}><PaneBottomIco /></StatusItem>
          <StatusItem $w={16} $ml={12}><PaneSplitIco /></StatusItem>
          <StatusItem $w={20} $ml={10} $on><GrayInspectorIco /></StatusItem>
          <StatusItem $w={16} $ml={10}><GearWindowIco /></StatusItem>
          <StatusItem $w={34} $ml={15}>100%</StatusItem>
          <StatusItem $w={10} $ml={17}><Minus size={12} /></StatusItem>
          <Slider><SliderThumb /></Slider>
          <StatusItem $w={10} $ml={12}><Plus size={12} /></StatusItem>
          <StatusItem $w={15} $ml={22}><FaArrowsAlt size={15} color="#666" /></StatusItem>
          <StatusItem $w={15} $ml={23}><FaBell size={15} color="#222" /></StatusItem>
          <StatusItem $w={11} $ml={14}><GripIco /></StatusItem>
        </StatusBar>
      </Window>
    </>
  );
}
